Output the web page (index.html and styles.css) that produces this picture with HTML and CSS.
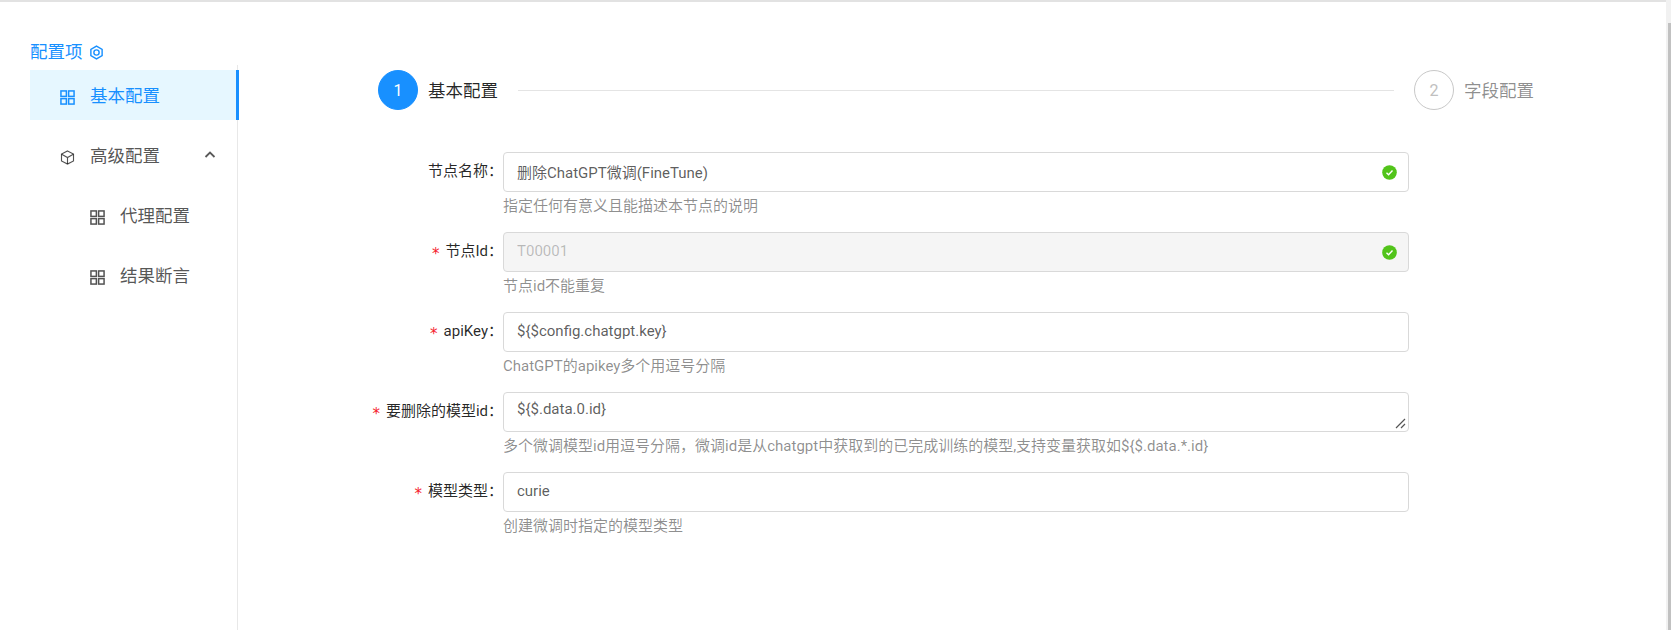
FILE: index.html
```html
<!DOCTYPE html>
<html lang="zh-CN">
<head>
<meta charset="utf-8">
<title>配置项</title>
<link rel="stylesheet" href="styles.css">
</head>
<body>
<div class="page">
  <aside class="side">
    <div class="side-title">配置项
      <svg class="hex" viewBox="0 0 16 16"><path d="M8 1.2 14 4.6v6.8L8 14.8 2 11.4V4.6z"/><circle cx="8" cy="8" r="2.8"/></svg>
    </div>
    <nav class="menu">
      <div class="item active">
        <svg class="ic" viewBox="0 0 16 16"><rect x="1" y="1" width="5.8" height="5.8"/><rect x="9.2" y="1" width="5.8" height="5.8"/><rect x="1" y="9.2" width="5.8" height="5.8"/><rect x="9.2" y="9.2" width="5.8" height="5.8"/></svg>
        <span class="txt">基本配置</span>
      </div>
      <div class="item">
        <svg class="ic cube" viewBox="0 0 16 16"><path d="M8 1 14.4 4.4V11.6L8 15 1.6 11.6V4.4z"/><path d="M1.8 4.6 8 8l6.2-3.4M8 8v6.8"/></svg>
        <span class="txt">高级配置</span>
        <svg class="chev" viewBox="0 0 12 12"><path d="M1.5 8 6 3.6 10.5 8"/></svg>
      </div>
      <div class="item sub">
        <svg class="ic" viewBox="0 0 16 16"><rect x="1" y="1" width="5.8" height="5.8"/><rect x="9.2" y="1" width="5.8" height="5.8"/><rect x="1" y="9.2" width="5.8" height="5.8"/><rect x="9.2" y="9.2" width="5.8" height="5.8"/></svg>
        <span class="txt">代理配置</span>
      </div>
      <div class="item sub">
        <svg class="ic" viewBox="0 0 16 16"><rect x="1" y="1" width="5.8" height="5.8"/><rect x="9.2" y="1" width="5.8" height="5.8"/><rect x="1" y="9.2" width="5.8" height="5.8"/><rect x="9.2" y="9.2" width="5.8" height="5.8"/></svg>
        <span class="txt">结果断言</span>
      </div>
    </nav>
  </aside>
  <main class="main">
    <div class="steps">
      <div class="dot on">1</div>
      <div class="step-label on">基本配置</div>
      <div class="step-line"></div>
      <div class="dot">2</div>
      <div class="step-label">字段配置</div>
    </div>
    <form class="form">
      <div class="row">
        <label class="lab"><span>节点名称：</span></label>
        <div class="ctl">
          <div class="box"><span class="val">删除ChatGPT微调(FineTune)</span><svg class="ok" viewBox="0 0 16 16"><circle cx="8" cy="8" r="7.8"/><path d="M4.8 8.2 7 10.3l4.2-4.4"/></svg></div>
          <div class="hint">指定任何有意义且能描述本节点的说明</div>
        </div>
      </div>
      <div class="row">
        <label class="lab"><i class="req">*</i><span>节点Id：</span></label>
        <div class="ctl">
          <div class="box off"><span class="val">T00001</span><svg class="ok" viewBox="0 0 16 16"><circle cx="8" cy="8" r="7.8"/><path d="M4.8 8.2 7 10.3l4.2-4.4"/></svg></div>
          <div class="hint">节点id不能重复</div>
        </div>
      </div>
      <div class="row">
        <label class="lab"><i class="req">*</i><span>apiKey：</span></label>
        <div class="ctl">
          <div class="box"><span class="val">${$config.chatgpt.key}</span></div>
          <div class="hint">ChatGPT的apikey多个用逗号分隔</div>
        </div>
      </div>
      <div class="row">
        <label class="lab"><i class="req">*</i><span>要删除的模型id：</span></label>
        <div class="ctl">
          <div class="box area"><span class="val">${$.data.0.id}</span><svg class="grip" viewBox="0 0 11 11"><path d="M1 10 10 1M6 10l4-4"/></svg></div>
          <div class="hint">多个微调模型id用逗号分隔，微调id是从chatgpt中获取到的已完成训练的模型,支持变量获取如${$.data.*.id}</div>
        </div>
      </div>
      <div class="row">
        <label class="lab"><i class="req">*</i><span>模型类型：</span></label>
        <div class="ctl">
          <div class="box"><span class="val">curie</span></div>
          <div class="hint">创建微调时指定的模型类型</div>
        </div>
      </div>
    </form>
  </main>
  <div class="scrollbar"><div class="thumb"></div></div>
</div>
</body>
</html>
```

FILE: styles.css
```css
* { box-sizing: border-box; }
html, body { margin: 0; height: 100%; overflow: hidden; background: #fff; }
body { font-family: Roboto, "Noto Sans CJK SC", "Noto Sans", sans-serif; font-size: 15px; color: rgba(0,0,0,.85); }
.page { display: flex; height: 630px; border-top: 2px solid #e2e2e2; }
.side { width: 239px; flex: none; padding: 38px 0 0 30px; display: flex; flex-direction: column; }
.side-title { color: #1890ff; font-size: 17.5px; line-height: 25px; height: 25px; display: flex; align-items: center; gap: 6px; }
.hex { width: 15px; height: 15px; fill: none; stroke: #1890ff; stroke-width: 1.5; }
.menu { flex: 1; border-right: 1px solid #e8e8e8; width: 208px; padding-top: 5px; }
.item { height: 50px; margin-bottom: 10px; padding-left: 30px; display: flex; align-items: center; gap: 15px; font-size: 17.5px; color: rgba(0,0,0,.68); position: relative; margin-right: -2px; }
.txt { padding-bottom: 2px; }
.item.sub { padding-left: 60px; }
.item.active { background: #e6f7ff; color: #1890ff; border-right: 3px solid #1890ff; }
.ic { width: 15px; height: 15px; flex: none; fill: none; stroke: currentColor; stroke-width: 1.6; margin-top: 5px; }
.cube { stroke-width: 1.2; }
.chev { width: 12px; height: 12px; fill: none; stroke: rgba(0,0,0,.65); stroke-width: 1.8; position: absolute; right: 23px; top: 19px; }
.main { flex: 1; padding: 68px 0 0 139px; }
.steps { display: flex; align-items: center; width: 1156px; height: 40px; }
.dot { width: 40px; height: 40px; border-radius: 50%; border: 1px solid #c8c8c8; color: #c0c0c0; font-size: 16px; display: flex; align-items: center; justify-content: center; flex: none; }
.dot.on { background: #1890ff; border-color: #1890ff; color: #fff; }
.step-label { font-size: 17.5px; color: rgba(0,0,0,.45); margin-left: 10px; flex: none; padding-bottom: 2px; }
.step-label.on { color: rgba(0,0,0,.85); }
.step-line { flex: 1; height: 1px; background: #e4e4e4; margin: 0 20px; }
.form { margin-top: 42px; display: flex; flex-direction: column; gap: 14px; }
.row { display: flex; }
.lab { width: 125px; flex: none; height: 40px; line-height: 38px; display: flex; justify-content: flex-end; color: rgba(0,0,0,.85); white-space: nowrap; }
.req { color: #f5222d; font-style: normal; font-family: "DejaVu Sans", sans-serif; margin-right: 6px; padding-top: 3px; }
.ctl { width: 906px; }
.box { height: 40px; border: 1px solid #d9d9d9; border-radius: 4px; display: flex; align-items: center; justify-content: space-between; padding: 0 11px 2px 13px; position: relative; background: #fff; }
.box.off { background: #f5f5f5; }
.box.off .val { color: rgba(0,0,0,.25); }
.val { color: rgba(0,0,0,.65); }
.box.area { align-items: flex-start; padding-top: 7px; }
.ok { width: 15px; height: 15px; margin-top: 2px; }
.ok circle { fill: #52c41a; }
.ok path { fill: none; stroke: #fff; stroke-width: 1.5; }
.grip { position: absolute; right: 2px; bottom: 2px; width: 11px; height: 11px; fill: none; stroke: #555; stroke-width: 1.2; }
.hint { color: rgba(0,0,0,.45); line-height: 20px; height: 22px; margin-top: 4px; white-space: nowrap; }
.scrollbar { position: fixed; right: 0; top: 0; bottom: 0; width: 5px; background: #f1f1f1; padding: 23px 0 0 2px; }
.thumb { height: 100%; background: #c1c1c1; }
```
